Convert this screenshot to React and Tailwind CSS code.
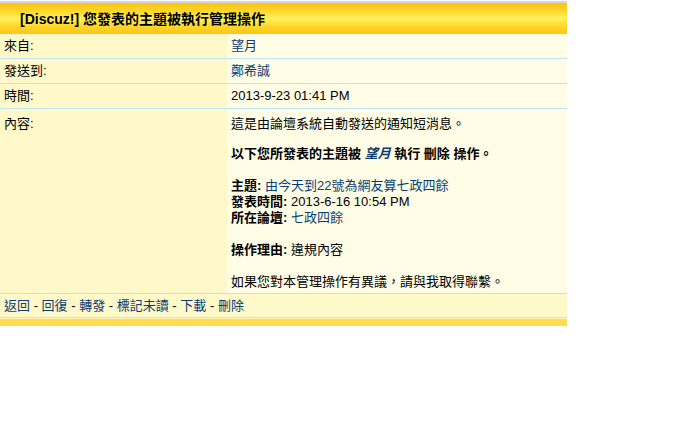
const FONT = "font-['Liberation_Sans','Noto_Sans_CJK_TC',sans-serif]";
const LINK = 'text-[#0b3c73]';

const Row = ({ label, children }) => (
  <div className="grid grid-cols-[227px_1fr] border-b border-[#bde3f5]">
    <div className="bg-[#fff8c9] px-1 h-6 flex items-center">{label}</div>
    <div className="bg-[#fffde5] px-1 h-6 flex items-center">{children}</div>
  </div>
);

export default function App() {
  return (
    <div className={`${FONT} text-[13px] leading-4 text-black bg-white w-[695px] h-[432px]`}>
      <div className="w-[567px] pt-px">
        <div className="h-[2px] bg-[#d6d6d6]" />
        {/* title bar */}
        <div className="h-[31px] flex items-center pl-5 font-bold text-[14px] bg-[linear-gradient(to_bottom,#ffc20e_0%,#ffd62a_25%,#fff25a_50%,#ffd62a_75%,#ffc517_100%)]">
          [Discuz!] 您發表的主題被執行管理操作
        </div>

        <Row label="來自:"><span className={LINK}>望月</span></Row>
        <Row label="發送到:"><span className={LINK}>鄭希誠</span></Row>
        <Row label="時間:">2013-9-23 01:41 PM</Row>

        <div className="grid grid-cols-[227px_1fr] border-b border-[#bde3f5]">
          <div className="bg-[#fff8c9] px-1 pt-[7px]">內容:</div>
          <div className="bg-[#fffde5] px-1 pt-[7px] pb-[3px]">
            <p>這是由論壇系統自動發送的通知短消息。</p>
            <p className="mt-[14px] font-bold">
              以下您所發表的主題被 <span className={`${LINK} italic`}>望月</span> 執行 刪除 操作。
            </p>
            <p className="mt-4"><b>主題:</b> <span className={LINK}>由今天到22號為網友算七政四餘</span></p>
            <p><b>發表時間:</b> 2013-6-16 10:54 PM</p>
            <p><b>所在論壇:</b> <span className={LINK}>七政四餘</span></p>
            <p className="mt-4"><b>操作理由:</b> 違規內容</p>
            <p className="mt-4">如果您對本管理操作有異議，請與我取得聯繫。</p>
          </div>
        </div>

        {/* footer links */}
        <div className="bg-[#fff8c9] h-6 flex items-center px-1 border-b border-[#bde3f5]">
          <span className={LINK}>返回</span>&nbsp;-&nbsp;
          <span className={LINK}>回復</span>&nbsp;-&nbsp;
          <span className={LINK}>轉發</span>&nbsp;-&nbsp;
          <span className={LINK}>標記未讀</span>&nbsp;-&nbsp;
          <span className={LINK}>下載</span>&nbsp;-&nbsp;
          <span className={LINK}>刪除</span>
        </div>
        <div className="h-px bg-[#fff3b0]" />
        <div className="h-[7px] bg-[#ffdd4f]" />
      </div>
    </div>
  );
}
